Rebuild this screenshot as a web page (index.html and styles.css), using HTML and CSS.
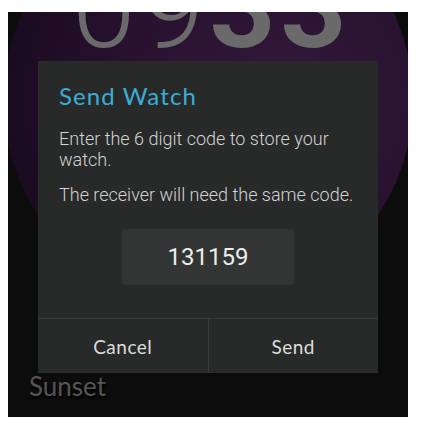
FILE: index.html
```html
<!DOCTYPE html>
<html>
<head>
    <title>Send Watch</title>
    <link rel="stylesheet" href="styles.css">
</head>
<body>
    <div class="screen">
        <div class="face"></div>
        <div class="clock"><span class="hours">09</span><span class="minutes">33</span></div>
        <div class="name">Sunset</div>

        <!-- Send dialog -->
        <div class="dialog">
            <div class="dialog-body">
                <h2 class="dialog-title">Send Watch</h2>
                <p>Enter the 6 digit code to store your watch.</p>
                <p>The receiver will need the same code.</p>
                <div class="code">131159</div>
            </div>
            <div class="dialog-actions">
                <button>Cancel</button>
                <button>Send</button>
            </div>
        </div>
    </div>
</body>
</html>
```
FILE: styles.css
```css
body {
    margin: 12px 13px 0 8px;
    background-color: #ffffff;
    font-family: Roboto, "Liberation Sans", sans-serif;
}

.screen {
    position: relative;
    width: 400px;
    height: 405px;
    background-color: #0c0c0c;
    overflow: hidden;
    display: flex;
    flex-direction: column;
    justify-content: space-between;
}

/* purple watch face behind the clock */
.face {
    position: absolute;
    left: -5px;
    top: -117px;
    width: 410px;
    height: 410px;
    border-radius: 50%;
    background: radial-gradient(circle at 68% 50%, #34183a 0%, #281230 45%, #1a0b20 80%, #110814 100%);
}

.clock {
    position: relative;
    margin-top: -62px;
    padding-left: 64px;
    font-family: Roboto, sans-serif;
    font-size: 115px;
    line-height: 1;
    color: #6a6a6a;
    letter-spacing: 5px;
}

.hours {
    font-weight: 300;
}

.minutes {
    font-weight: 700;
}

.name {
    position: relative;
    padding: 0 0 15px 21px;
    font-family: Lato, sans-serif;
    font-size: 26px;
    color: #555555;
    text-shadow: 1px 2px 2px #000;
}

.dialog {
    position: absolute;
    left: 30px;
    top: 49px;
    width: 340px;
    height: 312px;
    background-color: #282929;
    display: flex;
    flex-direction: column;
}

.dialog-body {
    flex: 1;
    padding: 20px 21px 0;
    display: flex;
    flex-direction: column;
}

.dialog-title {
    margin: 0 0 18px;
    font-family: Lato, sans-serif;
    font-weight: 400;
    font-size: 24px;
    letter-spacing: 1.1px;
    color: #3aaed6;
}

.dialog-body p {
    margin: 0 0 14px;
    font-size: 18px;
    font-weight: 300;
    line-height: 21px;
    color: #d4d4d4;
}

.code {
    align-self: center;
    margin-top: 10px;
    width: 172px;
    height: 56px;
    border-radius: 4px;
    background-color: #333434;
    color: #ececec;
    font-size: 24px;
    display: flex;
    justify-content: center;
    align-items: center;
}

.dialog-actions {
    height: 54px;
    border-top: 1px solid #3a3b3b;
    display: flex;
}

.dialog-actions button {
    flex: 1;
    background: none;
    border: none;
    color: #dddddd;
    font-family: Lato, sans-serif;
    font-size: 19px;
    letter-spacing: 0.5px;
    cursor: pointer;
}

.dialog-actions button + button {
    border-left: 1px solid #3a3b3b;
}
```
